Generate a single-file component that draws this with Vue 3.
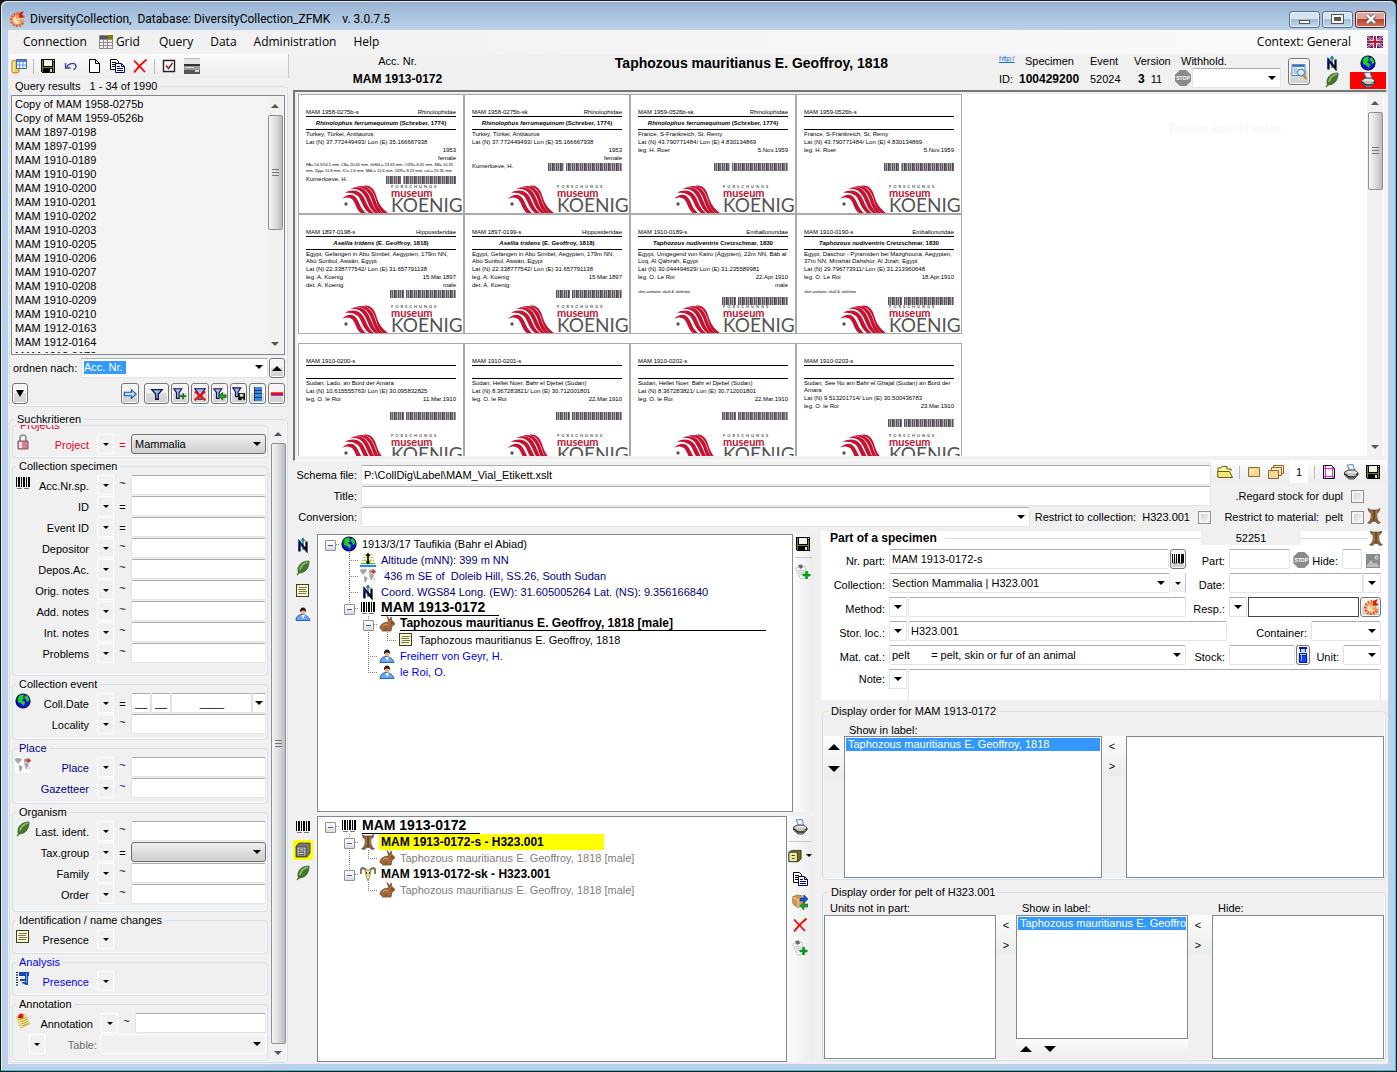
<script setup>
const accessions = [
  'Copy of MAM 1958-0275b', 'Copy of MAM 1959-0526b', 'MAM 1897-0198', 'MAM 1897-0199',
  'MAM 1910-0189', 'MAM 1910-0190', 'MAM 1910-0200', 'MAM 1910-0201', 'MAM 1910-0202',
  'MAM 1910-0203', 'MAM 1910-0205', 'MAM 1910-0206', 'MAM 1910-0207', 'MAM 1910-0208',
  'MAM 1910-0209', 'MAM 1910-0210', 'MAM 1912-0163', 'MAM 1912-0164', 'MAM 1912-0172',
]

const filterButtons = [
  { icon: 'go', label: 'Next', cls: 'go' },
  { icon: 'filter', label: 'Filter', cls: 'wide' },
  { icon: 'filter-add', label: 'Add to filter' },
  { icon: 'filter-del', label: 'Clear filter' },
  { icon: 'filter-load', label: 'Load filter' },
  { icon: 'filter-save', label: 'Save filter' },
  { icon: 'rows', label: 'Rows' },
  { icon: 'minus', label: 'Remove' },
]

const groups = [
  {
    title: 'Collection specimen', icon: 'barcode', cls: 'tall',
    rows: [
      ['Acc.Nr.sp.', '~'], ['ID', '='], ['Event ID', '='], ['Depositor', '~'], ['Depos.Ac.', '~'],
      ['Orig. notes', '~'], ['Add. notes', '~'], ['Int. notes', '~'], ['Problems', '~'],
    ],
  },
  { title: 'Collection event', icon: 'globe', rows: [['Coll.Date', '=', 'date'], ['Locality', '~']] },
  { title: 'Place', icon: 'map', cls: 'navy', rows: [['Place', '~'], ['Gazetteer', '~']] },
  {
    title: 'Organism', icon: 'leaf', cls: 'mid',
    rows: [['Last. ident.', '~'], ['Tax.group', '=', 'select'], ['Family', '~'], ['Order', '~']],
  },
  { title: 'Identification / name changes', icon: 'note', rows: [['Presence', '', 'none']] },
  { title: 'Analysis', icon: 'caliper', cls: 'blue', rows: [['Presence', '', 'none']] },
]

const bat = { sci: 'Rhinolophus ferrumequinum', auth: '(Schreber, 1774)' }
const asellia = { sci: 'Asellia tridens', auth: '(E. Geoffroy, 1818)' }
const tapho = { sci: 'Taphozous nudiventris', auth: 'Cretzschmar, 1830' }
const simbel = 'Egypt, Gefangen in Abu Simbel, Aegypten, 179m NN, Abū Sunbul, Aswān, Egypt'
const sheets = [
  [
    { nr: 'MAM 1958-0275b-s', fam: 'Rhinolophidae', name: bat, place: 'Turkey, Türkei, Antitaurus', geo: 'Lat (N) 37.772449493/ Lon (E) 35.166667938', rows: [['', '1953'], ['', 'female']], note: 'FA= 54.5/54.5 mm, CB= 20.45 mm, GtSkL= 23.65 mm, OZR= 8.45 mm, SB= 10.35 mm, Zyg= 11.8 mm, IO= 2.6 mm, MdL= 15.6 mm, UZR= 8.23 mm, coL= 20.35 mm', foot: 'Kumerloeve, H.', bar: 70 },
    { nr: 'MAM 1958-0275b-sk', fam: 'Rhinolophidae', name: bat, place: 'Turkey, Türkei, Antitaurus', geo: 'Lat (N) 37.772449493/ Lon (E) 35.166667938', rows: [['', '1953'], ['', 'female']], foot: 'Kumerloeve, H.', bar: 74 },
    { nr: 'MAM 1959-0526b-sk', fam: 'Rhinolophidae', name: bat, place: 'France, S-Frankreich, St. Remy', geo: 'Lat (N) 43.790771484/ Lon (E) 4.830134869', rows: [['leg. H. Roer', '5.Nov.1959'], ['', '']], bar: 74 },
    { nr: 'MAM 1959-0526b-s', fam: '', place: 'France, S-Frankreich, St. Remy', geo: 'Lat (N) 43.790771484/ Lon (E) 4.830134869', rows: [['leg. H. Roer', '5.Nov.1959'], ['', '']], bar: 70 },
    { nr: 'MAM 1897-0198-s', fam: 'Hipposideridae', name: asellia, place: simbel, geo: 'Lat (N) 22.338777542/ Lon (E) 31.657791138', rows: [['leg. A. Koenig', '15.Mar.1897'], ['det. A. Koenig', 'male']], bar: 66 },
    { nr: 'MAM 1897-0199-s', fam: 'Hipposideridae', name: asellia, place: simbel, geo: 'Lat (N) 22.338777542/ Lon (E) 31.657791138', rows: [['leg. A. Koenig', '15.Mar.1897'], ['det. A. Koenig', '']], bar: 66 },
    { nr: 'MAM 1910-0189-s', fam: 'Emballonuridae', name: tapho, place: 'Egypt, Umgegend von Kairo (Ägypten), 22m NN, Bāb al Luq, Al Qāhirah, Egypt', geo: 'Lat (N) 30.044494629/ Lon (E) 31.235589981', rows: [['leg. O. Le Roi', '22.Apr.1910'], ['', 'male']], note: 'skin contains skull & skeleton', bar: 66 },
    { nr: 'MAM 1910-0190-s', fam: 'Emballonuridae', name: tapho, place: 'Egypt, Daschur - Pyramiden bei Mazghouna, Aegypten, 37m NN, Minshāt Dahshūr, Al Jīzah, Egypt', geo: 'Lat (N) 29.796773911/ Lon (E) 31.213960648', rows: [['leg. O. Le Roi', '18.Apr.1910'], ['', '']], note: 'skin contains skull & skeleton', bar: 66 },
  ],
  [
    { nr: 'MAM 1910-0200-s', fam: '', place: 'Sudan, Lado, an Bord der Amara', geo: 'Lat (N) 10.615555763/ Lon (E) 30.095832825', rows: [['leg. O. le Roi', '11.Mar.1910'], ['', '']], bar: 66 },
    { nr: 'MAM 1910-0201-s', fam: '', place: 'Sudan, Hellet Noer, Bahr el Djebel (Sudan)', geo: 'Lat (N) 8.367283821/ Lon (E) 30.712001801', rows: [['leg. O. le Roi', '22.Mar.1910'], ['', '']], bar: 66 },
    { nr: 'MAM 1910-0202-s', fam: '', place: 'Sudan, Hellet Noer, Bahr el Djebel (Sudan)', geo: 'Lat (N) 8.367283821/ Lon (E) 30.712001801', rows: [['leg. O. le Roi', '22.Mar.1910'], ['', '']], bar: 66 },
    { nr: 'MAM 1910-0203-s', fam: '', place: 'Sudan, See No am Bahr el Ghajal (Sudan) an Bord der Amara', geo: 'Lat (N) 9.513201714/ Lon (E) 30.500436783', rows: [['leg. O. le Roi', '23.Mar.1910'], ['', '']], bar: 66 },
  ],
]

/* guides: b = box, B = box with line above, T = box with line above and below, t = tee, l = corner, v = line */
const eventTree = [
  { g: ['b'], icon: 'globe', text: '1913/3/17 Taufikia (Bahr el Abiad)' },
  { g: ['', 't'], icon: 'altitude', text: 'Altitude (mNN): 399 m NN', cls: 'navy' },
  { g: ['', 't'], icon: 'map', text: ' 436 m SE of  Doleib Hill, SS.26, South Sudan', cls: 'navy' },
  { g: ['', 't'], icon: 'north', text: 'Coord. WGS84 Long. (EW): 31.605005264 Lat. (NS): 9.356166840', cls: 'navy' },
  { g: ['', 'B'], icon: 'barcode', text: 'MAM 1913-0172', cls: 'root' },
  { g: ['', '', 'T'], icon: 'rabbit', text: 'Taphozous mauritianus E. Geoffroy, 1818 [male]', cls: 'unit' },
  { g: ['', '', 'v', 'l'], icon: 'note', text: 'Taphozous mauritianus E. Geoffroy, 1818' },
  { g: ['', '', 't'], icon: 'person', text: 'Freiherr von Geyr, H.', cls: 'blue' },
  { g: ['', '', 'l'], icon: 'person', text: 'le Roi, O.', cls: 'blue' },
]
const partTree = [
  { g: ['b'], icon: 'barcode', text: 'MAM 1913-0172', cls: 'root' },
  { g: ['', 'T'], icon: 'pelt', text: 'MAM 1913-0172-s - H323.001', cls: 'part marked' },
  { g: ['', 'v', 'l'], icon: 'rabbit', text: 'Taphozous mauritianus E. Geoffroy, 1818 [male]', cls: 'grey' },
  { g: ['', 'B'], icon: 'skull', text: 'MAM 1913-0172-sk - H323.001', cls: 'part' },
  { g: ['', '', 'l'], icon: 'rabbit', text: 'Taphozous mauritianus E. Geoffroy, 1818 [male]', cls: 'grey' },
]
</script>

<template>
  <svg class="sprite" aria-hidden="true">
    <symbol id="i-app" viewBox="0 0 16 16">
      <path d="M14 6.500a6 6 0 1 0 .3 3.500" fill="none" stroke="#ee5a1c" stroke-width="3" stroke-dasharray="2 1" />
      <circle cx="8" cy="9" r="4.500" fill="#ffe3c0" stroke="#f58a3c" />
      <path d="M8 9l5-1-1 4zM8 9L6 5h4z" fill="#f7a14e" /><path d="M10 2l5-2-2 4 3 2-6 1z" fill="#d9210e" />
    </symbol>
    <symbol id="i-grid" viewBox="0 0 16 16" shape-rendering="crispEdges">
      <path d="M1 1h14v14H1z" fill="#8c8c8c" /><path d="M2 2h8v3H2z" fill="#555" /><path d="M10 1h5v4h-5z" fill="#808000" />
      <path d="M2 6h3v2H2zm4 0h3v2H6zm4 0h4v2h-4zM2 9h3v2H2zm4 0h3v2H6zm4 0h4v2h-4zM2 12h3v2H2zm4 0h3v2H6zm4 0h4v2h-4z" fill="#f4f4f4" />
    </symbol>
    <symbol id="i-db" viewBox="0 0 16 16">
      <path d="M1 3.500C1 2 8 2 8 3.500v10c0 2-7 2-7 0z" fill="#f6c94b" stroke="#b27a12" />
      <path d="M2.500 4v10" stroke="#fff3c0" stroke-width="1.500" />
      <path d="M5.500 1.500h10v9h-10z" fill="#eef5fd" stroke="#3b68b8" /><path d="M6 2h9v2H6z" fill="#4d83d9" /><path d="M8.500 4v6M12 4v6M6 7h9" stroke="#6c97d8" />
    </symbol>
    <symbol id="i-save" viewBox="0 0 16 16" shape-rendering="crispEdges">
      <path d="M1 1h14v14H2l-1-1z" fill="#000" /><path d="M2 2h1v12H2zM13 4h1v10h-1zM3 9h10v1H3z" fill="#808000" /><path d="M4 2h8v6H4z" fill="#f2f2f2" /><path d="M13 2h1v1h-1z" fill="#f2f2f2" /><path d="M10 11h2v3h-2z" fill="#d8d8d8" />
    </symbol>
    <symbol id="i-undo" viewBox="0 0 16 16">
      <path d="M3.500 9.500C5 5 12 4 13 8c.5 2-1 3-2.500 4" fill="none" stroke="#3d3da8" stroke-width="1.300" /><path d="M2.500 5v5h5" fill="none" stroke="#3d3da8" stroke-width="1.300" />
    </symbol>
    <symbol id="i-new" viewBox="0 0 16 16"><path d="M3.500 1.500h6l4 4v9h-10z" fill="#fff" stroke="#000" /><path d="M9.500 1.500v4h4" fill="none" stroke="#000" /></symbol>
    <symbol id="i-copy" viewBox="0 0 16 16">
      <path d="M1.500 1.500h6l2 2v8h-8z" fill="#fff" stroke="#000" /><path d="M3 4.500h4M3 6.500h4M3 8.500h4" stroke="#000" />
      <path d="M6.500 5.500h6l3 3v6h-9z" fill="#fff" stroke="#00007c" /><path d="M12.500 5.500v3h3M8 8.500h3M8 10.500h6M8 12.500h6" fill="none" stroke="#00007c" />
    </symbol>
    <symbol id="i-del" viewBox="0 0 16 16"><path d="M2 2.500l11 11.500" stroke="#f00" stroke-width="1.800" /><path d="M14.500 1.500C9 6 6 9 2 14.500" fill="none" stroke="#f00" stroke-width="1.800" /></symbol>
    <symbol id="i-check" viewBox="0 0 16 16"><path d="M2.500 2.500h11v11h-11z" fill="#fff" stroke="#222" stroke-width="1.400" /><path d="M5 7.500l2.500 3L11.500 5" fill="none" stroke="#a01818" stroke-width="1.600" /></symbol>
    <symbol id="i-scan" viewBox="0 0 16 16"><path d="M0 0h16v6H0z" fill="#e4e4e4" /><path d="M0 6h16v2H0z" fill="#333" /><path d="M0 8h16v4H0z" fill="#9a9a9a" /><path d="M0 12h16v4H0z" fill="#555" /><path d="M1 9h9v1H1zM11 12h4v2h-4z" fill="#d4d4d4" /><path d="M0 .5h16" stroke="#bbb" /></symbol>
    <symbol id="i-north" viewBox="0 0 16 16"><path d="M8 1v12" stroke="#1786b8" stroke-width="1.500" /><path d="M5.500 4L8 .5 10.500 4z" fill="#1786b8" /><path d="M4.500 14.500V5l7 8.500V4.500" fill="none" stroke="#000" stroke-width="2.200" /><path d="M3.500 14V5l7 8.500" fill="none" stroke="#1c35d8" stroke-width="1" /></symbol>
    <symbol id="i-leaf" viewBox="0 0 16 16"><path d="M14 1C7 1 3 5 3 10c0 1 0 2 .5 3C10 13 14 9 14 1z" fill="#3f7a34" stroke="#2c5a22" stroke-width=".8" /><path d="M13 2C9 3 6 5 5 10" fill="none" stroke="#8fc06a" stroke-width="1.600" /><path d="M11 5L2 15" stroke="#5d6b1f" stroke-width="1.200" /></symbol>
    <symbol id="i-globe" viewBox="0 0 16 16"><circle cx="8" cy="8" r="7" fill="#0f14d6" stroke="#000054" stroke-width="1.200" /><path d="M3 4c2-3 5-3 6-2L8 4l1 1-2 2 3 2-1 4-3-3-3-1zM11 2c3 2 3.500 4 3 6l-2 1-1-3-2-1z" fill="#21d321" /><path d="M1.500 6l2-3v5z" fill="#0a8a0a" /></symbol>
    <symbol id="i-print" viewBox="0 0 16 16"><path d="M4 1l6-.5L12 7H7z" fill="#eaf4ff" stroke="#5b87b8" /><path d="M1.500 8l4-2h6l3.500 3v2l-4 4H6l-4.500-4z" fill="#c4c4c4" stroke="#444" /><path d="M2 10l4 3h5l4-3.500" fill="none" stroke="#222" stroke-width="1.400" /><path d="M4 8h8l2 1" fill="none" stroke="#fff" /><path d="M11 12l3-1" stroke="#6fae3a" stroke-width="1.200" /></symbol>
    <symbol id="i-flag" viewBox="0 0 16 12"><path d="M0 0h16v12H0z" fill="#fff" /><path d="M1.500 0H6v3zM10 0h4.500L10 3zM0 1.500L4 4.500H0zM16 1.500v3h-4zM0 7.500h4l-4 3zM12 7.500h4v3zM1.500 12L6 9v3zM10 9l4.500 3H10z" fill="#23328f" /><path d="M7 0h2v12H7zM0 5h16v2H0z" fill="#d01030" /><path d="M0 0l5.500 4M16 0l-5.500 4M0 12l5.500-4M16 12l-5.500-4" stroke="#d01030" stroke-width="1.200" /></symbol>
    <symbol id="i-find" viewBox="0 0 16 16"><path d="M.5.5h13v11H.5z" fill="#f4f9ff" stroke="#5a86c0" /><path d="M1 1h12v2H1z" fill="#3c78c8" /><path d="M2 5h4M2 7h4M2 9h4" stroke="#6e9ad4" /><circle cx="9.500" cy="8.500" r="3.500" fill="#d6ecff" stroke="#3a6ea8" /><path d="M12 11.500l3 3.500" stroke="#c98a2b" stroke-width="2" /></symbol>
    <symbol id="i-barcode" viewBox="0 0 16 16" shape-rendering="crispEdges"><path d="M1 2h1v10H1zM3 2h2v10H3zM6 2h1v10H6zM8 2h2v10H8zM11 2h1v10h-1zM13 2h2v10h-2z" fill="#000" /><path d="M2 13h5v1H2zM9 13h5v1H9z" fill="#777" /></symbol>
    <symbol id="i-map" viewBox="0 0 16 16"><path d="M0 0h16v16H0z" fill="#fbfbfb" /><path d="M0 1.500L3 1l4 .5L6 4 4.500 5 4 7 2 5.500.5 4zM4 8l3.500 1.500L7 12l-2 3-1-3zM9 2.500l2-1.500 4 1 1 2-2 2-3-1-2 1zM9 6.500l3-1 2 2-1.500 3L11 13l-1-4z" fill="#a6a6a6" /><path d="M13 11l2-1v3z" fill="#c0c0c0" /><path d="M11.500 3.500h4M13.500 1.500v4" stroke="#f02020" stroke-width="1.400" /></symbol>
    <symbol id="i-note" viewBox="0 0 16 16" shape-rendering="crispEdges"><path d="M1 1h13v13H1z" fill="#3c3c28" /><path d="M2 2h11v11H2z" fill="#fbf9cc" /><path d="M4 4h8v1H4zM3 6h8v1H3zM4 8h8v1H4zM3 10h8v1H3z" fill="#77775a" /></symbol>
    <symbol id="i-caliper" viewBox="0 0 16 16"><path d="M2 1v14" stroke="#000" stroke-width="2" stroke-dasharray="1 1.500" /><path d="M4 1h10v4h-1v9h-2l-4-2v-1h3V5H4zM5 8h5v2H5z" fill="#1648b4" /><path d="M11.500 2v10" stroke="#5aa0f0" /></symbol>
    <symbol id="i-memo" viewBox="0 0 16 16"><path d="M1 4l9-3 5 10-9 4z" fill="#f7eb8e" stroke="#c9b24a" stroke-width=".7" /><path d="M4 7l7-2.500M5 9l7-2.500M6 11l7-2.500M7 13l6-2.500" stroke="#a58c35" stroke-width=".8" /><circle cx="6" cy="3" r="2.600" fill="#dc2418" /><path d="M3 5l3-2" stroke="#7e0d08" /></symbol>
    <symbol id="i-person" viewBox="0 0 16 16"><path d="M1 14.500c0-4 3-6 6-6s7 2 8 6z" fill="#6aa6f2" stroke="#2f62b8" /><path d="M6.500 9l1.500 4 2-4z" fill="#fff" /><circle cx="8" cy="5.500" r="2.800" fill="#e5b48a" /><path d="M5 6C4 0 12 0 11 6c-1-2-4-2-6 0z" fill="#2a1408" /></symbol>
    <symbol id="i-altitude" viewBox="0 0 16 16"><path d="M4 2.500h8M3 5.500h10M2 8.500h12" stroke="#d0d016" stroke-width="1.200" /><path d="M1 11.500h14" stroke="#53c013" stroke-width="1.200" /><path d="M8 2v10" stroke="#000" stroke-width="1.600" /><path d="M5.500 4L8 .5 10.500 4zM5.500 9.500L8 12.500l2.500-3z" fill="#000" /><path d="M0 13h16v2H0z" fill="#1a8fe8" /></symbol>
    <symbol id="i-rabbit" viewBox="0 0 16 16"><path d="M10 6L8 .5 11 4l1-3 1 4c2 1 3 2 2.500 3.500L13 10l-1 5H3l5-2c-3 0-6 2-7-1 0-4 5-6 9-6z" fill="#a8673a" stroke="#6c3b1c" stroke-width=".7" /><circle cx="13" cy="7" r=".7" fill="#111" /><path d="M4 10c1-2 3-2 5-1" fill="none" stroke="#d9a27a" /></symbol>
    <symbol id="i-pelt" viewBox="0 0 16 16"><path d="M2 .5l3 1.500h6L14 .5l-1 3-2 2v4l1 3 2.500 2.500-3 .5L9 13l-1 1-1-1-2.500 2.500-3-.5L4 12.500l1-3v-4l-2-2z" fill="#8c6038" stroke="#5a4128" stroke-width=".6" /><path d="M8 2v11" stroke="#4e3018" /><path d="M6 3v8M10.500 3L10 11" stroke="#b98c5e" stroke-width=".8" /></symbol>
    <symbol id="i-skull" viewBox="0 0 16 16"><path d="M6 4C2 0 0 3 1 8M10 4c4-4 6-1 5 4" fill="none" stroke="#77756d" stroke-width="2.200" /><path d="M5 4h6l-1 6-2 5-2-5z" fill="#eadb94" stroke="#8a7a3a" stroke-width=".7" /><path d="M6 6h1v2H6zM9 6h1v2H9z" fill="#4c3a10" /></symbol>
    <symbol id="i-cabinet" viewBox="0 0 16 16"><path d="M1 4l3-3h11v10l-3 4H1z" fill="#787878" stroke="#333" stroke-width=".8" /><path d="M2 5h9v9H2z" fill="#d2d2d2" stroke="#333" stroke-width=".8" /><path d="M4 7h5v2H4zM4 10.500h5v2H4z" fill="#eee" stroke="#333" stroke-width=".8" /></symbol>
    <symbol id="i-cabinet2" viewBox="0 0 16 16"><path d="M1 4l3-2h10v9l-3 3H1z" fill="#6f6a18" stroke="#222" stroke-width=".8" /><path d="M1 4h9v10H1z" fill="#eeeaa0" stroke="#222" stroke-width=".8" /><path d="M4 7h3v1H4zM4 10h3v1H4z" fill="#222" /></symbol>
    <symbol id="i-swap" viewBox="0 0 16 16"><path d="M0 3l5-2 7 1v8l-6 4-5-4z" fill="#cc9a55" stroke="#8a6330" stroke-width=".6" /><path d="M6 6v8M0 3l6 3 6-4" fill="none" stroke="#f0cf96" /><path d="M8 4h4V1l4 4-4 4V7H8z" fill="#1450e8" stroke="#00207a" stroke-width=".5" /><path d="M16 10h-4V8l-4 4 4 4v-3h4z" fill="#17a32a" stroke="#075012" stroke-width=".5" /></symbol>
    <symbol id="i-addnote" viewBox="0 0 16 16"><path d="M.5 4l9-2 4 11-8 2z" fill="#fafafa" stroke="#b4b4b4" stroke-width=".7" /><path d="M3 7l6-1M4 9l5-1M5 11l4-1" stroke="#bbb" /><path d="M3 1l4-.5 1 3-3 1.500z" fill="#666" /><path d="M11.500 7v8M7.500 11h8" stroke="#0b9a18" stroke-width="2.600" /></symbol>
    <symbol id="i-folder" viewBox="0 0 16 16"><path d="M1 13V4h3l1-1.500h5V5h4v2" fill="#fbf6a0" stroke="#6d5c08" /><path d="M1 13.500L.5 7.500h12l3 6z" fill="#f1e87a" stroke="#6d5c08" /></symbol>
    <symbol id="i-card" viewBox="0 0 16 16"><path d="M2.500 3.500h11v9h-11z" fill="#f6d694" stroke="#8a6b2c" /><path d="M4 6h5M4 8h4" stroke="#fff3cf" /></symbol>
    <symbol id="i-cards" viewBox="0 0 16 16"><path d="M5.500 1.500h10v8h-10z" fill="#fae7bb" stroke="#8a6b2c" /><path d="M3.500 3.500h10v8h-10z" fill="#fae7bb" stroke="#8a6b2c" /><path d="M.5 6.500h10v8H.5z" fill="#f6d694" stroke="#8a6b2c" /></symbol>
    <symbol id="i-margins" viewBox="0 0 16 16"><path d="M2.500 1.500h8l3 3v10h-11z" fill="#fff" stroke="#000" /><path d="M4.500 2v12M11.500 3v11M3 4.500h10M3 12.500h10" stroke="#f01ff0" /></symbol>
    <symbol id="i-photo" viewBox="0 0 16 16"><path d="M1 1h14v14H1z" fill="#8b8b8b" /><path d="M2 12l4-5 3 4 2-2 3 4v1H2z" fill="#bdbdbd" /><circle cx="11.500" cy="4.500" r="1.500" fill="none" stroke="#eee" /></symbol>
    <symbol id="i-tube" viewBox="0 0 10 16" shape-rendering="crispEdges"><path d="M1 0h8v2H8v3H7v1h2v10H1V6h2V5H2V2H1z" fill="#0a1a9a" /><path d="M3 2h4v4H3zM2 7h6v1H2z" fill="#b8dcff" /><path d="M2 9h6v6H2z" fill="#1240ff" /><path d="M3 7h1v7H3z" fill="#8cc4ff" /></symbol>
    <symbol id="i-go" viewBox="0 0 16 16"><path d="M1.500 6h8V3l5.500 5-5.500 5v-3h-8z" fill="#b9e2ff" stroke="#1450a8" stroke-width="1.200" /></symbol>
    <symbol id="i-filter" viewBox="0 0 16 16"><path d="M2 3h12L9.500 8v6h-3V8z" fill="#a8b8e8" stroke="#101050" stroke-width="1.500" /></symbol>
    <symbol id="i-filter-add" viewBox="0 0 16 16"><path d="M1 2h9L7 6.500V13H4V6.500z" fill="#a8b8e8" stroke="#101050" stroke-width="1.300" /><path d="M11.500 7v7M8 10.500h7" stroke="#0b7a18" stroke-width="2" /></symbol>
    <symbol id="i-filter-del" viewBox="0 0 16 16"><path d="M2 2h12L10 7v7H6V7z" fill="#a8b8e8" stroke="#101050" stroke-width="1.300" /><path d="M2 5l12 10M14 5L2 15" stroke="#e81010" stroke-width="2.500" /></symbol>
    <symbol id="i-filter-load" viewBox="0 0 16 16"><path d="M1 2h9L7 6.500V13H4V6.500z" fill="#a8b8e8" stroke="#101050" stroke-width="1.300" /><path d="M7 10l4-4v3h4v3h-4v3z" fill="#18b020" stroke="#054a08" stroke-width=".8" /></symbol>
    <symbol id="i-filter-save" viewBox="0 0 16 16"><path d="M1 1h9L7 5.500V11H4V5.500z" fill="#a8b8e8" stroke="#101050" stroke-width="1.300" /><path d="M7 7h8v8H7z" fill="#111" /><path d="M9 8h4v3H9zM11 13h2v2h-2z" fill="#d8d8a0" /></symbol>
    <symbol id="i-rows" viewBox="0 0 16 16" shape-rendering="crispEdges"><path d="M3 0h10v16H3z" fill="#2f8fe8" /><path d="M3 3h10v1H3zM3 7h10v1H3zM3 11h10v1H3zM3 0h1v16H3zM12 0h1v16h-1z" fill="#253a5a" /></symbol>
    <symbol id="i-minus" viewBox="0 0 16 16"><path d="M1 6h14v2H1z" fill="#f01010" /><path d="M1 8h14v2H1z" fill="#a01878" /></symbol>
    <symbol id="i-lock" viewBox="0 0 16 16"><path d="M5 8V4c0-4 6-4 6 0v4" fill="none" stroke="#8d8d8d" stroke-width="1.600" /><path d="M3 7h10v8H3z" fill="#d87f92" stroke="#7a5a60" /><path d="M4 8h3v6H4z" fill="#f5dfe4" /></symbol>
    <symbol id="i-waves" viewBox="0 0 50 30">
      <g fill="#c41230">
        <path d="M1 14C7 8 13 9 16 14c3 5 4 10 9 14h-5c-5-3-5-10-9-14-3-2-6-2-10 0z" />
        <path d="M4 8c6-4 14-3 18 3 4 7 5 13 11 17h-5c-6-4-7-12-11-17C13 8 9 7 4 8z" />
        <path d="M9 4c7-4 15-1 18 5 4 7 5 14 11 19h-4c-6-4-7-12-11-18C20 5 15 3 9 4z" />
        <path d="M15 2c8-3 14 1 17 7s4 14 10 19h-4c-6-5-6-13-10-19-3-5-7-7-13-7z" />
        <path d="M22 1c7-2 11 3 13 9 2 7 5 13 12 18h-5c-6-5-6-12-9-18-2-5-5-8-11-9z" />
      </g>
      <circle cx="5" cy="19" r="1.700" fill="#555" />
    </symbol>
  </svg>

  <div class="window">
    <header class="titlebar">
      <svg class="ic"><use href="#i-app" /></svg>
      <span class="caption">DiversityCollection,&nbsp; Database: DiversityCollection_ZFMK&nbsp;&nbsp;&nbsp; v. 3.0.7.5</span>
      <button class="wb" aria-label="Minimize"><i class="min"></i></button>
      <button class="wb" aria-label="Maximize"><i class="max"></i></button>
      <button class="wb close" aria-label="Close">
        <svg viewBox="0 0 12 10"><path d="M2 1l8 8M10 1L2 9" stroke="#444" stroke-width="4" /><path d="M2 1l8 8M10 1L2 9" stroke="#fff" stroke-width="2.500" /></svg>
      </button>
    </header>

    <div class="client">
      <nav class="menu">
        <button>Connection</button>
        <button class="with-icon"><svg class="ic"><use href="#i-grid" /></svg>Grid</button>
        <button>Query</button><button>Data</button><button>Administration</button><button>Help</button>
        <span class="context">Context: General</span>
        <svg class="flag"><use href="#i-flag" /></svg>
      </nav>

      <div class="body">
        <aside class="side">
          <div class="toolbar">
            <template v-for="(n, i) in ['db', '|', 'save', 'undo', 'new', 'copy', 'del', '|', 'check', 'scan']" :key="i">
              <i v-if="n === '|'" class="sep"></i>
              <button v-else :aria-label="n"><svg class="ic"><use :href="'#i-' + n" /></svg></button>
            </template>
          </div>

          <fieldset class="box results">
            <legend>Query results&nbsp;&nbsp; 1 - 34 of 1990</legend>
            <div class="listwrap">
              <ul class="acc">
                <li v-for="a in accessions" :key="a">{{ a }}</li>
              </ul>
              <div class="sb"><i class="up"></i><b class="thumb short"></b><i class="down"></i></div>
            </div>
            <div class="order">
              <label for="order">ordnen nach:</label>
              <div class="combo"><input id="order" value="Acc. Nr." size="7"><i class="tri"></i></div>
              <button class="pb" aria-label="Ascending"><i class="bigup"></i></button>
            </div>
            <div class="filters">
              <button class="pb" aria-label="More"><i class="bigdown"></i></button>
              <button v-for="f in filterButtons" :key="f.icon" class="pb" :class="f.cls" :aria-label="f.label">
                <svg class="ic"><use :href="'#i-' + f.icon" /></svg>
              </button>
            </div>
          </fieldset>

          <fieldset class="box criteria">
            <legend>Suchkritieren</legend>
            <div class="scroller">
              <div class="groups">
                <fieldset class="box grp red first">
                  <legend>Projects</legend>
                  <div class="crit">
                    <svg class="ic"><use href="#i-lock" /></svg>
                    <label for="project">Project</label>
                    <button class="dd" aria-label="Operator"></button>
                    <span class="op">=</span>
                    <select id="project" class="flat"><option>Mammalia</option></select>
                  </div>
                </fieldset>
                <fieldset v-for="(g, gi) in groups" :key="g.title" class="box grp" :class="g.cls">
                  <legend>{{ g.title }}</legend>
                  <div v-for="(r, ri) in g.rows" :key="r[0]" class="crit">
                    <svg class="ic"><use v-if="ri === 0" :href="'#i-' + g.icon" /></svg>
                    <label :for="'c' + gi + '-' + ri">{{ r[0] }}</label>
                    <button :id="r[2] === 'none' ? 'c' + gi + '-' + ri : undefined" class="dd" aria-label="Operator"></button>
                    <span class="op" :class="{ tilde: r[1] === '~' }">{{ r[1] }}</span>
                    <div v-if="r[2] === 'date'" class="date">
                      <input :id="'c' + gi + '-' + ri" value="__" aria-label="Day"><input value="__" aria-label="Month"><input class="year" value="____" aria-label="Year">
                      <button class="dd white" aria-label="Pick date"></button>
                    </div>
                    <select v-else-if="r[2] === 'select'" :id="'c' + gi + '-' + ri" class="flat"><option></option></select>
                    <input v-else-if="!r[2]" :id="'c' + gi + '-' + ri" class="tx">
                  </div>
                </fieldset>
                <fieldset class="box grp anno">
                  <legend>Annotation</legend>
                  <div class="crit">
                    <svg class="ic"><use href="#i-memo" /></svg>
                    <label for="anno">Annotation</label>
                    <button class="dd" aria-label="Operator"></button>
                    <span class="op tilde">~</span>
                    <input id="anno" class="tx">
                  </div>
                  <div class="crit tablerow">
                    <button class="dd" aria-label="Table type"></button>
                    <label for="tbl">Table:</label>
                    <select id="tbl" class="disabled" disabled><option></option></select>
                  </div>
                </fieldset>
              </div>
              <div class="sb"><i class="up"></i><b class="thumb full"></b><i class="down"></i></div>
            </div>
          </fieldset>
        </aside>

        <main class="main">
          <section class="head">
            <div class="acccol"><span>Acc. Nr.</span><strong>MAM 1913-0172</strong></div>
            <h1>Taphozous mauritianus E. Geoffroy, 1818</h1>
            <div class="ids">
              <div class="c1"><a href="#">http:/</a><span>ID:</span></div>
              <div class="c2"><span>Specimen</span><strong>100429200</strong></div>
              <div class="c3"><span>Event</span><span>52024</span></div>
              <div class="c4"><span>Version</span><span><strong>3</strong>&nbsp; 11</span></div>
              <div class="c5">
                <label for="withhold">Withhold.</label>
                <span class="wh"><span class="stop">STOP</span><select id="withhold"><option></option></select></span>
              </div>
              <button class="pb find" aria-label="Find"><svg class="ic"><use href="#i-find" /></svg></button>
              <div class="pair"><svg class="ic"><use href="#i-north" /></svg><svg class="ic"><use href="#i-leaf" /></svg></div>
              <div class="pair wide"><svg class="ic"><use href="#i-globe" /></svg><span class="redbox"><svg class="ic"><use href="#i-print" /></svg></span></div>
            </div>
          </section>

          <section class="preview">
            <div class="pages">
              <div v-for="(sheet, si) in sheets" :key="si" class="sheet">
                <article v-for="l in sheet" :key="l.nr" class="label">
                  <div class="lrow rule"><span>{{ l.nr }}</span><span>{{ l.fam }}</span></div>
                  <div class="lname"><template v-if="l.name"><em>{{ l.name.sci }}</em> {{ l.name.auth }}</template></div>
                  <p class="place">{{ l.place }}</p>
                  <p>{{ l.geo }}</p>
                  <div v-for="(r, ri) in l.rows" :key="ri" class="lrow"><span>{{ r[0] }}</span><span>{{ r[1] }}</span></div>
                  <p v-if="l.note" class="lnote" :class="{ ital: !l.foot }">{{ l.note }}</p>
                  <div class="lrow"><span>{{ l.foot }}</span><i class="code" :style="{ width: l.bar + 'px' }"></i></div>
                  <div class="museum">
                    <svg class="waves"><use href="#i-waves" /></svg>
                    <div class="brand"><small>FORSCHUNGS</small><b>museum</b><span>KOENIG</span></div>
                  </div>
                </article>
              </div>
            </div>
            <span class="ghost">Fenster ausschneiden</span>
            <div class="sb"><i class="up"></i><b class="thumb small"></b><i class="down"></i></div>
          </section>

          <section class="schema">
            <div class="srow">
              <label for="schema">Schema file:</label><input id="schema" class="tx" value="P:\CollDig\Label\MAM_Vial_Etikett.xslt">
              <div class="stools">
                <button aria-label="Open"><svg class="ic"><use href="#i-folder" /></svg></button><i class="bar"></i>
                <button aria-label="Single"><svg class="ic"><use href="#i-card" /></svg></button>
                <button aria-label="Multiple"><svg class="ic"><use href="#i-cards" /></svg></button>
                <input class="count" value="1" aria-label="Copies"><i class="bar"></i>
                <button aria-label="Page setup"><svg class="ic"><use href="#i-margins" /></svg></button>
                <button aria-label="Print"><svg class="ic"><use href="#i-print" /></svg></button>
                <button aria-label="Save"><svg class="ic"><use href="#i-save" /></svg></button>
              </div>
            </div>
            <div class="srow">
              <label for="title">Title:</label><input id="title" class="tx">
              <div class="sopt"><label for="dupl">.Regard stock for dupl</label><input id="dupl" type="checkbox"></div>
            </div>
            <div class="srow">
              <label for="conv">Conversion:</label>
              <select id="conv"><option></option></select>
              <div class="sopt restrict"><label for="rc">Restrict to collection:&nbsp; H323.001</label><input id="rc" type="checkbox"></div>
              <div class="sopt"><label for="rm">Restrict to material:&nbsp; pelt</label><input id="rm" type="checkbox"><svg class="ic"><use href="#i-pelt" /></svg></div>
            </div>
          </section>

          <section class="lower">
            <div class="trees">
              <div class="pane p1">
                <div class="rail">
                  <button v-for="n in ['north', 'leaf', 'note', 'person']" :key="n" :aria-label="n"><svg class="ic"><use :href="'#i-' + n" /></svg></button>
                </div>
                <div class="tree">
                  <div v-for="(n, i) in eventTree" :key="i" class="node">
                    <i v-for="(g, gi) in n.g" :key="gi" class="g" :class="g && 'g-' + g"></i>
                    <svg class="ic"><use :href="'#i-' + n.icon" /></svg><span :class="n.cls">{{ n.text }}</span>
                  </div>
                </div>
                <div class="rtools">
                  <button aria-label="Save"><svg class="ic"><use href="#i-save" /></svg></button><hr>
                  <button aria-label="Add"><svg class="ic"><use href="#i-addnote" /></svg></button>
                </div>
              </div>
              <div class="pane p2">
                <div class="rail">
                  <button v-for="n in ['barcode', 'cabinet', 'leaf']" :key="n" :aria-label="n" :class="{ on: n === 'cabinet' }"><svg class="ic"><use :href="'#i-' + n" /></svg></button>
                </div>
                <div class="tree">
                  <div v-for="(n, i) in partTree" :key="i" class="node">
                    <i v-for="(g, gi) in n.g" :key="gi" class="g" :class="g && 'g-' + g"></i>
                    <svg class="ic"><use :href="'#i-' + n.icon" /></svg><span :class="n.cls">{{ n.text }}</span>
                  </div>
                </div>
                <div class="rtools low">
                  <button aria-label="Print"><svg class="ic"><use href="#i-print" /></svg></button><hr>
                  <button class="drop" aria-label="Collection"><svg class="ic"><use href="#i-cabinet2" /></svg><i class="tri"></i></button>
                  <button v-for="n in ['copy', 'swap', 'del', 'addnote']" :key="n" :aria-label="n"><svg class="ic"><use :href="'#i-' + n" /></svg></button>
                </div>
              </div>
            </div>

            <div class="detail">
              <div class="spec">
                <div class="spechead"><h2>Part of a specimen</h2><i class="line"></i><span class="num">52251</span><i class="line"></i><svg class="ic"><use href="#i-pelt" /></svg></div>
                <div class="form">
                  <div class="frow">
                    <label for="nr">Nr. part:</label><input id="nr" class="tx" value="MAM 1913-0172-s">
                    <button class="pb" aria-label="Barcode"><svg class="ic"><use href="#i-barcode" /></svg></button>
                    <div class="fr"><label for="part">Part:</label><input id="part" class="tx"><span class="stop">STOP</span><label class="inner" for="hide">Hide:</label><input id="hide" class="tx tiny"><svg class="ic"><use href="#i-photo" /></svg></div>
                  </div>
                  <div class="frow">
                    <label for="coll">Collection:</label><select id="coll"><option>Section Mammalia | H323.001</option></select>
                    <button class="dd plain" aria-label="More"></button>
                    <div class="fr"><label for="date">Date:</label><input id="date" class="tx"><button class="dd white" aria-label="Pick date"></button></div>
                  </div>
                  <div class="frow">
                    <label for="meth">Method:</label><button class="dd white" aria-label="Method list"></button><input id="meth" class="tx">
                    <div class="fr"><label for="resp">Resp.:</label><button class="dd white" aria-label="Person list"></button><input id="resp" class="tx dark"><button class="pb agent" aria-label="Agent"><svg class="ic"><use href="#i-app" /></svg></button></div>
                  </div>
                  <div class="frow">
                    <label for="stor">Stor. loc.:</label><button class="dd white" aria-label="Location list"></button><input id="stor" class="tx" value="H323.001">
                    <div class="fr cont"><label for="cont">Container:</label><select id="cont"><option></option></select></div>
                  </div>
                  <div class="frow">
                    <label for="mat">Mat. cat.:</label><select id="mat"><option>pelt&nbsp;&nbsp;&nbsp;&nbsp;&nbsp;&nbsp;&nbsp;= pelt, skin or fur of an animal</option></select>
                    <div class="fr"><label for="stock">Stock:</label><input id="stock" class="tx"><button class="pb slim" aria-label="Stock"><svg class="ic"><use href="#i-tube" /></svg></button><label class="inner" for="unit">Unit:</label><select id="unit" class="unit-sel"><option></option></select></div>
                  </div>
                  <div class="frow note">
                    <label for="note">Note:</label><button class="dd white" aria-label="Note list"></button><textarea id="note"></textarea>
                  </div>
                </div>
              </div>

              <fieldset class="box disp">
                <legend>Display order for MAM 1913-0172</legend>
                <div class="caprow">Show in label:</div>
                <div class="lists">
                  <div class="mv"><button aria-label="Up"><i class="up10"></i></button><button aria-label="Down"><i class="down10"></i></button></div>
                  <ul class="lb"><li class="sel">Taphozous mauritianus E. Geoffroy, 1818</li></ul>
                  <div class="mv lr wide"><button>&lt;</button><button>&gt;</button></div>
                  <ul class="lb"></ul>
                </div>
              </fieldset>

              <fieldset class="box disp two">
                <legend>Display order for pelt of H323.001</legend>
                <div class="lists">
                  <div class="lcol"><span>Units not in part:</span><ul class="lb"></ul></div>
                  <div class="mv lr"><button>&lt;</button><button>&gt;</button></div>
                  <div class="lcol"><span>Show in label:</span><ul class="lb"><li class="sel">Taphozous mauritianus E. Geoffroy, 1818</li></ul>
                    <div class="ud"><button aria-label="Up"><i class="up10"></i></button><button aria-label="Down"><i class="down10"></i></button></div></div>
                  <div class="mv lr wide"><button>&lt;</button><button>&gt;</button></div>
                  <div class="lcol"><span>Hide:</span><ul class="lb"></ul></div>
                </div>
              </fieldset>
            </div>
          </section>
        </main>
      </div>
    </div>
  </div>
</template>

<style>
body { margin: 0; background: #111; }
</style>

<style scoped>
* { box-sizing: border-box; }
.sprite { position: absolute; width: 0; height: 0; }
button, input, select, textarea { font: inherit; color: inherit; margin: 0; padding: 0; border-radius: 0; }
button { border: 0; background: none; display: flex; align-items: center; justify-content: center; flex: none; }
.ic { width: 16px; height: 16px; flex: none; display: block; }
ul { list-style: none; margin: 0; padding: 0; }
.window {
  min-height: 100vh; display: flex; flex-direction: column; color: #000;
  font: 11px/13px "Liberation Sans", Arial, sans-serif;
  background: #b9d1ea; padding: 0 8px 7px 7px; border: 1px solid #1a1a1a; border-radius: 7px 7px 0 0;
  box-shadow: inset -1px -1px 0 #35c5dc, inset 1px 1px 0 #e6f0fa;
}
.titlebar { height: 28px; display: flex; align-items: center; gap: 2px; margin: 1px -7px 0 -6px; padding: 6px 9px 0 7px; background: linear-gradient(#98b3d2, #bcd2ea); border-radius: 6px 6px 0 0; font: 12px/16px Roboto, sans-serif; flex: none; }
.caption { flex: 1; white-space: nowrap; padding-left: 3px; }
.wb { width: 31px; height: 17px; border: 1px solid #5b7089; border-radius: 3px; background: linear-gradient(#d6e3f0 45%, #a3bcd6 50%, #c3d8ec); box-shadow: inset 0 0 0 1px #e4eef8; }
.wb .min { width: 11px; height: 4px; background: #fff; border: 1px solid #555; margin-top: 5px; }
.wb .max { width: 11px; height: 8px; background: #555; border: 2px solid #fff; outline: 1px solid #555; }
.wb.close { background: linear-gradient(#e0a398 45%, #b8412c 50%, #d6715c); border-color: #5a1e1a; }
.wb svg { width: 12px; height: 10px; }
.client { flex: 1; display: flex; flex-direction: column; background: #f0f0f0; }
.menu { height: 24px; display: flex; align-items: center; padding: 0 5px 0 8px; background: linear-gradient(90deg, #f0f0f0, #fafafa); font: 12px/16px "Open Sans", sans-serif; }
.menu button { padding: 0 7px; height: 20px; margin-right: 3px; }
.menu .with-icon { gap: 2px; padding: 0 9px 0 1px; }
.context { margin-left: auto; }
.flag { width: 16px; height: 12px; margin-left: 16px; }
.body { flex: 1; display: flex; }

.side { width: 281px; flex: none; display: flex; flex-direction: column; padding: 0 0 1px 1px; }
.toolbar { height: 24px; margin-bottom: 1px; display: flex; align-items: center; gap: 7px; padding: 0 2px; background: linear-gradient(#fcfcfc, #ececec); border-right: 1px solid #c8c8c8; }
.sep { width: 1px; height: 15px; background: #b8b8b8; margin: 0 -1px; }
.box { border: 1px solid #d3dfe8; border-radius: 4px; margin: 0; padding: 0 1px; min-width: 0; box-shadow: inset -1px -1px 0 #fafcfd; }
.box > legend { height: 14px; line-height: 14px; padding: 0 3px; margin-left: 1px; white-space: pre; }
.results { padding: 2px 2px 2px 1px; margin-right: 1px; }
.listwrap { display: flex; height: 260px; border: 1px solid #828790; background: #f4f4f4; padding: 1px; }
.acc { flex: 1; overflow: hidden; padding-left: 2px; }
.acc li { height: 14px; line-height: 14px; }
.sb { width: 16px; flex: none; display: flex; flex-direction: column; align-items: center; background: #f1f1f1; }
.sb .up, .sb .down { height: 18px; width: 16px; flex: none; display: flex; align-items: center; justify-content: center; }
.sb .up::after { content: ""; border: 4px solid transparent; border-top-width: 0; border-bottom-color: #555; }
.sb .down { margin-top: auto; }
.sb .down::after { content: ""; border: 4px solid transparent; border-bottom-width: 0; border-top-color: #555; }
.thumb { width: 15px; border: 1px solid #8e8f94; border-radius: 2px; background: repeating-linear-gradient(#777 0 1px, transparent 1px 3px) center / 7px 8px no-repeat, linear-gradient(90deg, #f6f6f6, #dadada 55%, #bcbcbc); }
.thumb.short { height: 115px; }
.thumb.small { height: 78px; }
.thumb.full { flex: 1; }
.order { display: flex; align-items: center; height: 20px; margin-top: 3px; }
.order label { padding: 0 3px 0 2px; flex: 1; white-space: nowrap; }
.combo { width: 187px; height: 20px; background: #fff; border: 1px solid #e2e3ea; border-top-color: #abadb3; display: flex; align-items: center; justify-content: space-between; padding: 0 4px 2px 2px; }
.combo input { width: 42px; height: 13px; border: 0; background: #3399ff; color: #fff; }
.tri { border: 4px solid transparent; border-bottom-width: 0; border-top-color: #000; flex: none; }
.pb { height: 20px; min-width: 16px; border: 1px solid #777; border-radius: 3px; background: linear-gradient(#f4f4f4 45%, #dcdcdc 50%, #d0d0d0); box-shadow: inset 0 0 0 1px #fbfbfb; }
.order .pb { margin-left: 1px; }
.bigup { border: 5px solid transparent; border-top-width: 0; border-bottom-color: #000; }
.bigdown { border: 4px solid transparent; border-bottom: 0; border-top: 7px solid #000; }
.filters { display: flex; justify-content: flex-end; gap: 2px; height: 21px; margin-top: 5px; }
.filters .pb { width: 18px; height: 21px; }
.filters .pb:nth-child(n + 6) { width: 17px; }
.filters .pb:first-child { width: 16px; margin-right: auto; margin-left: 1px; }
.filters .go { margin-right: 3px; }
.filters .wide { width: 25px; }
.filters .ic { width: 14px; height: 14px; }
.criteria { flex: 1; display: flex; flex-direction: column; margin-top: 6px; padding: 0 1px 0 2px; margin-right: 1px; }
.criteria > legend { height: 12px; line-height: 12px; margin-left: 2px; }
.scroller { display: flex; justify-content: space-between; overflow: hidden; flex: 1; }
.groups { width: 256px; display: flex; flex-direction: column; gap: 1px; }
.grp { padding: 2px 1px 3px 2px; }
.grp > legend { margin-left: 1px; }
.grp.first { margin-top: -7px; padding-bottom: 2px; }
.grp.first > legend { padding: 0 4px; }
.grp.tall { padding-bottom: 11px; }
.grp.mid { padding-bottom: 6px; }
.grp.anno { padding-bottom: 5px; }
.grp:nth-child(3), .grp:nth-child(4) { padding-bottom: 4px; }
.red { color: #e8001c; } .red select { color: #000; }
.navy { color: #00008b; } .blue { color: #0000ff; } .grey { color: #808080; }
.crit { display: flex; height: 21px; align-items: flex-start; }
.crit label { width: 58px; text-align: right; line-height: 22px; white-space: nowrap; flex: none; }
.crit > .dd { margin-left: 8px; }
.dd { width: 17px; height: 20px; border: 1px solid #fff; background: #f0f0f0; }
.dd::after { content: ""; border: 3px solid transparent; border-bottom-width: 0; border-top-color: #000; }
.dd.white { width: 18px; background: #fff; border-color: #abadb3 #e2e3ea #e2e3ea; }
.dd.white::after { border-width: 4px 4px 0; }
.dd.plain { width: 16px; background: linear-gradient(#fdfdfd, #f0f0f0); border-color: #fff #c4c4c4 #fff #fff; }
.op { width: 17px; text-align: center; line-height: 22px; flex: none; }
.op.tilde { line-height: 17px; }
.tx, select, .date input, textarea { flex: 1; min-width: 0; height: 20px; border: 1px solid #e2e3ea; border-top-color: #abadb3; border-radius: 2px; background: #fff; padding: 0 2px; outline: 0; }
select { appearance: none; padding: 0 16px 0 2px; background: #fff url("data:image/svg+xml,%3Csvg xmlns='http://www.w3.org/2000/svg' width='8' height='4'%3E%3Cpath d='M0 0h8L4 4z'/%3E%3C/svg%3E") right 4px center no-repeat; }
select.flat { border: 1px solid #707070; border-radius: 3px; padding-left: 3px; background-image: url("data:image/svg+xml,%3Csvg xmlns='http://www.w3.org/2000/svg' width='8' height='4'%3E%3Cpath d='M0 0h8L4 4z'/%3E%3C/svg%3E"), linear-gradient(#f2f2f2, #dcdcdc 55%, #cfcfcf); background-position: right 4px center, 0 0; background-repeat: no-repeat; }
select.disabled { background-color: #f0f0f0; border-color: #fff; opacity: 1; }
.date { flex: 1; display: flex; }
.date input { flex: none; width: 20px; padding: 0 2px 0 3px; }
.date .year { flex: 1; text-align: center; }
.date .dd { width: 14px; }
.anno .crit label { width: 62px; }
.anno .tablerow label { width: 52px; color: #6d6d6d; margin: 0 3px 0 0; }
.tablerow .dd { margin-left: 14px; width: 16px; }

.main { flex: 1; min-width: 0; display: flex; flex-direction: column; padding-left: 2px; }
.head { display: flex; height: 36px; }
.acccol { width: 213px; display: flex; flex-direction: column; align-items: center; }
.acccol span { line-height: 14px; }
.acccol strong { font-size: 12px; line-height: 22px; }
.head h1 { flex: 1; margin: 0; text-align: center; font-size: 14px; line-height: 18px; }
.ids { display: flex; flex: none; white-space: nowrap; }
.ids > div { display: flex; flex-direction: column; align-items: flex-start; line-height: 17px; }
.ids > div > span { height: 17px; }
.ids .c1 { width: 20px; }
.c1 a { font-size: 7px; line-height: 10px; height: 17px; color: #0a6ed0; }
.ids .c2 { width: 71px; }
.c2 span { padding-left: 6px; line-height: 14px; } .c2 strong { font-size: 12px; line-height: 16px; }
.ids .c3 { width: 44px; } .c3 span:first-child, .c4 > span:first-child { line-height: 14px; }
.ids .c4 { width: 41px; } .c4 > span:last-child { padding-left: 4px; } .c4 strong { font-size: 12px; }
.c5 label { padding-left: 6px; line-height: 14px; height: 14px; }
.ids .c5 .wh { display: flex; align-items: center; gap: 1px; height: 20px; }
.wh select { flex: none; width: 89px; }
.stop { width: 16px; height: 16px; flex: none; font-size: 5px; font-weight: 700; line-height: 16px; text-align: center; color: #fff; background: #8a8a8a; clip-path: polygon(30% 0, 70% 0, 100% 30%, 100% 70%, 70% 100%, 30% 100%, 0 70%, 0 30%); }
.find { width: 22px; height: 27px; margin: 4px 0 0 7px; }
.find .ic { width: 17px; }
.ids .pair { margin-left: 14px; width: 16px; align-items: center; gap: 1px; padding-top: 1px; }
.ids .pair.wide { width: 36px; margin: 0 2px 0 10px; }
.redbox { background: #ff0000; width: 36px; display: flex; justify-content: center; }

.preview { position: relative; height: 371px; display: flex; margin: 0 1px 0 2px; border: 2px solid #767676; border-right: 1px solid #fff; border-bottom: 1px solid #fff; padding: 2px 3px 4px 3px; background: #fff; box-shadow: inset 2px 2px 0 #f0edf0, inset -2px -4px 0 #f0f0f0; }
.pages { flex: 1; overflow: hidden; display: flex; flex-direction: column; gap: 9px; }
.sheet { display: grid; grid-template-columns: repeat(4, 166px); }
.label { height: 120px; border: 1px solid #a9a9a9; padding: 13px 7px 0; font-size: 6px; line-height: 8px; display: flex; flex-direction: column; position: relative; overflow: hidden; }
.label p { margin: 0; white-space: nowrap; }
.lrow { display: flex; justify-content: space-between; height: 8px; white-space: nowrap; }
.rule { height: 9px; border-bottom: 1px solid #000; }
.lname { height: 13px; line-height: 13px; border-bottom: 1px solid #000; text-align: center; font-weight: 700; white-space: nowrap; }
.label .place { white-space: normal; line-height: 7px; padding-top: 1px; }
.label .lnote { font-size: 4px; line-height: 6px; padding-bottom: 1px; white-space: normal; }
.lnote.ital { font-style: italic; }
.code { height: 8px; margin-top: 1px; background: linear-gradient(90deg, transparent 21%, #fff 21% 24%, transparent 24%), repeating-linear-gradient(90deg, #555 0 1px, #a88fa8 1px 2px, #4f6f66 2px 3px, #b8b0c0 3px 4px, #5d3a48 4px 5px, #6d6d74 5px 7px, #c0b4b4 7px 8px); flex: none; }
.museum { position: absolute; right: 0; bottom: 0; display: flex; align-items: flex-end; }
.waves { width: 50px; height: 30px; margin-bottom: -2px; }
.brand { width: 72px; display: flex; flex-direction: column; font-family: Lato, sans-serif; color: #555; white-space: nowrap; }
.brand small { font-size: 4px; line-height: 4px; font-weight: 700; letter-spacing: 2px; }
.brand b { font-size: 11px; line-height: 8px; color: #c41230; }
.brand span { font-size: 19px; line-height: 16px; }
.ghost { position: absolute; right: 105px; top: 29px; color: #f3f3f3; font: 11px/14px "Open Sans", sans-serif; }

.schema { display: flex; flex-direction: column; gap: 1px; padding: 4px 1px 0 0; height: 70px; }
.srow { display: flex; height: 20px; }
.srow > label { width: 66px; text-align: right; line-height: 20px; margin-right: 4px; flex: none; white-space: nowrap; }
.stools { width: 176px; height: 22px; margin-top: -4px; padding: 0 6px; display: flex; align-items: center; justify-content: space-between; background: linear-gradient(#fcfcfc, #ececec); }
.bar { width: 1px; height: 13px; background: #bbb; }
.count { width: 18px; height: 22px; border: 0; background: #fff; text-align: center; }
.sopt { width: 176px; display: flex; align-items: center; justify-content: flex-end; gap: 8px; padding-right: 23px; white-space: nowrap; }
.sopt .ic { margin: -2px -18px 0 -6px; }
.sopt.restrict { width: 181px; padding: 0; }
input[type="checkbox"] { appearance: none; width: 13px; height: 13px; border: 1px solid #8e8f8f; background: linear-gradient(135deg, #cbcfd5, #f6f6f6); box-shadow: inset 0 0 0 2px #f4f4f4; flex: none; }

.lower { flex: 1; display: flex; }
.trees { flex: 1; display: flex; flex-direction: column; gap: 4px; padding: 3px 8px 2px 0; min-width: 0; }
.pane { display: flex; flex: 1 1 0; }
.p1 { flex-grow: 277; } .p2 { flex-grow: 246; }
.rail { width: 26px; padding: 1px 2px 0 0; display: flex; flex-direction: column; align-items: center; gap: 3px; }
.rail button { width: 20px; height: 20px; }
.rail .on { background: #ffff00; }
.tree { flex: 1; min-width: 0; background: #fff; border: 1px solid #828790; padding: 1px 0 0 3px; overflow: hidden; }
.node { display: flex; height: 16px; align-items: center; white-space: pre; }
.node .ic { margin: 0 5px 0 1px; }
.node span { line-height: 16px; }
.g { width: 19px; height: 16px; flex: none; position: relative; }
.g-t, .g-T, .g-l, .g-B { background-image: repeating-linear-gradient(#808080 0 1px, transparent 1px 2px), repeating-linear-gradient(90deg, #808080 0 1px, transparent 1px 2px); background-size: 1px 16px, 10px 1px; background-position: 9px 0, 9px 8px; background-repeat: no-repeat; }
.g-l, .g-B { background-size: 1px 8px, 10px 1px; }
.g-v { background: repeating-linear-gradient(#808080 0 1px, transparent 1px 2px) 9px 0 / 1px 16px no-repeat; }
.g-b { background: repeating-linear-gradient(90deg, #808080 0 1px, transparent 1px 2px) 9px 8px / 10px 1px no-repeat; }
.g-b::after, .g-B::after, .g-T::after { content: ""; position: absolute; left: 4px; top: 4px; width: 9px; height: 9px; border: 1px solid #919191; border-radius: 1px; background: linear-gradient(#3f5fb0, #3f5fb0) center / 5px 1px no-repeat, linear-gradient(#fff, #ddd); }
.node .root { font-size: 14px; font-weight: 700; line-height: 15px; border-bottom: 1px solid #000; padding-right: 14px; }
.node .unit { font-size: 12px; font-weight: 700; line-height: 13px; border-bottom: 1px solid #000; padding-right: 93px; }
.node .part { font-size: 12px; font-weight: 700; line-height: 16px; }
.node .marked { background: #ffff00; padding: 0 60px 0 2px; margin-left: -2px; }
.rtools { width: 20px; display: flex; flex-direction: column; align-items: center; background: linear-gradient(90deg, #fcfcfc, #ececec); padding-top: 2px; }
.rtools hr { width: 17px; margin: 5px 0 6px; border: 0; border-top: 1px solid #c8c8c8; }
.rtools.low { width: 26px; gap: 7px; padding-top: 3px; }
.rtools.low hr { margin: -1px 0; width: 22px; }
.drop { gap: 3px; } .drop .ic { width: 15px; } .drop .tri { border-width: 3px 3px 0; }

.detail { width: 567px; flex: none; display: flex; flex-direction: column; }
.spec { background: #fff; height: 169px; overflow: hidden; padding: 0 4px 0 2px; }
.spechead { display: flex; align-items: center; height: 14px; padding-left: 7px; }
.spechead h2 { margin: 0 8px 0 0; font-size: 12px; line-height: 14px; }
.line { height: 1px; background: #d3dfe8; flex: 1; }
.num { width: 100px; height: 14px; line-height: 14px; text-align: center; background: #f0f0f0; }
.num + .line { flex: none; width: 67px; }
.form { display: flex; flex-direction: column; gap: 4px; padding: 4px 3px 0 0; }
.frow { display: flex; height: 20px; }
.frow > label { width: 62px; text-align: right; line-height: 24px; margin-right: 4px; flex: none; white-space: nowrap; }
.frow > .pb { margin-left: 1px; }
.frow > .pb .ic { width: 14px; }
.frow > .dd.white { margin-right: 1px; }
.fr { display: flex; width: 195px; flex: none; }
.fr > label { width: 39px; text-align: right; line-height: 24px; margin-right: 4px; white-space: nowrap; }
.fr > label.inner { width: auto; margin: 0 4px 0 2px; }
.fr > .stop { margin: 3px 1px 0 3px; }
.fr > .ic { margin: 4px 0 0 3px; }
.fr .tiny { flex: none; width: 20px; }
.fr .dark { border: 1px solid #444; border-radius: 0; margin: 0 1px; }
.fr.cont { width: 154px; } .fr.cont > label { width: 80px; }
.slim { margin: 0 4px 0 1px; min-width: 14px; } .slim .ic { width: 10px; }
.agent { width: 21px; }
.fr .unit-sel { flex: none; width: 38px; }
.frow.note { height: 40px; }
.frow.note > label { line-height: 21px; }
.frow textarea { height: 40px; resize: none; }
.disp { margin: 4px 2px 0 1px; display: flex; flex-direction: column; flex: 1 1 0; padding: 0 1px 1px; }
.disp > legend { margin-left: 4px; }
.caprow { height: 18px; line-height: 24px; padding-left: 25px; }
.disp .lists { flex: 1; display: flex; }
.mv { width: 20px; display: flex; flex-direction: column; align-self: flex-start; background: linear-gradient(#fcfcfc, #ececec); }
.mv button { height: 22px; width: 20px; }
.mv.wide { width: 24px; }
.mv.lr button { width: 20px; height: 20px; }
.lb { flex: 1 1 0; border: 1px solid #828790; background: #fff; padding: 1px; overflow: hidden; min-width: 0; }
.lb .sel { background: #3399ff; color: #fff; height: 13px; line-height: 13px; white-space: nowrap; padding-left: 2px; overflow: hidden; }
.up10 { border: 6px solid transparent; border-top-width: 0; border-bottom-color: #000; }
.down10 { border: 6px solid transparent; border-bottom-width: 0; border-top-color: #000; }
.two { margin: 5px 2px 3px 1px; }
.two .lcol { flex: 1 1 0; display: flex; flex-direction: column; min-width: 0; }
.two .lcol > span { height: 16px; line-height: 18px; padding-left: 6px; }
.two .mv { margin-top: 16px; }
.ud { height: 20px; display: flex; align-items: center; gap: 4px; background: linear-gradient(#fcfcfc, #ececec); }
.ud button { width: 20px; height: 20px; }
</style>
